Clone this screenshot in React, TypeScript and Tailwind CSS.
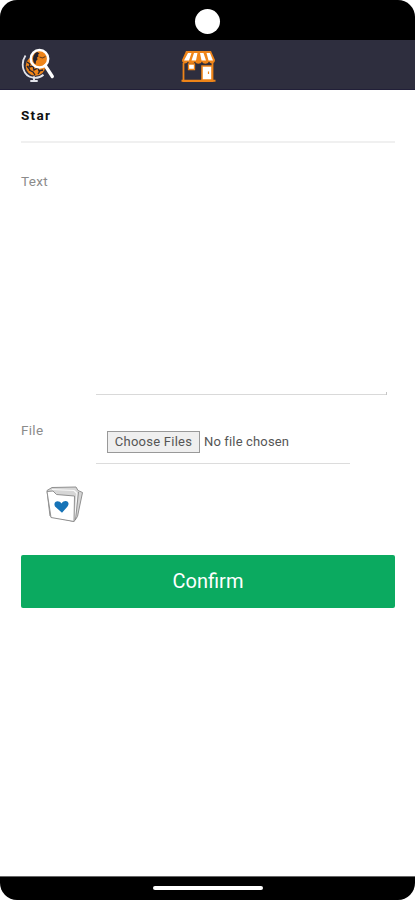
function SearchGlobeIcon() {
  return (
    <svg width="36" height="36" viewBox="0 0 36 36" fill="none" aria-hidden="true">
      <circle cx="14.500" cy="18" r="9.800" fill="#ee8419" />
      <path
        d="M6 14l3 2-1 3 4-1 1 4 4-2 1 3 4-1M8 22l4 2 2 3M17 26l2-3M6 18l3 4"
        stroke="#25222d"
        strokeWidth="1.300"
      />
      <path d="M4.500 7.500C-1 16 2 28 12 29.700c4 .5 8-.8 10.500-3" stroke="#e3e4ea" strokeWidth="1.800" />
      <path d="M13 29v4M10 33h6" stroke="#e3e4ea" strokeWidth="1.900" strokeLinecap="round" />
      <circle cx="18.500" cy="10.800" r="8.700" fill="#ee8419" stroke="#fff" strokeWidth="2.500" />
      <path
        d="M16.500 4c-4 1-6 7-3 11.500l1.200.5.300-3 1.500-1.500-.5-2 1.500-1-.5-2 1.500-.8z"
        fill="#25222d"
      />
      <path d="M18.500 9l3 1 3-1.500" stroke="#68401f" strokeWidth="1.100" />
      <path d="M24.500 18l6.800 10.500" stroke="#fff" strokeWidth="3.300" strokeLinecap="round" />
    </svg>
  );
}

function StoreIcon() {
  return (
    <svg width="36" height="32" viewBox="0 0 36 32" fill="none" aria-hidden="true">
      <path d="M2.500 12v18h29V12" stroke="#ee8419" strokeWidth="1.800" />
      <path d="M.5 29.800h34" stroke="#ee8419" strokeWidth="2" />
      <path d="M5 0h25l4 9c0 4-4.500 4.500-6 1.500-1.500 3-6 3-7 0-1.500 3-6 3-7 0-1.500 3-6 3-7 0C5.500 13.500 1 13 1 9z" fill="#ee8419" />
      <path
        d="M7 2h3.500L8 9.500H3zM13 2h3.500L15 9.500h-4.500zM19 2h3.500l2.500 7.500h-4.500zM25.500 2H29l3 7.500h-4.500z"
        fill="#fff"
      />
      <path d="M7.500 13h6v5.500h-6z" fill="#fff" stroke="#ee8419" strokeWidth="1.300" />
      <path d="M21 15h10v14H21z" fill="#fff" stroke="#ee8419" strokeWidth="1.600" />
      <path d="M27.500 20.500v2.500" stroke="#ee8419" strokeWidth="1.200" />
    </svg>
  );
}

function FolderIcon() {
  return (
    <svg width="38" height="38" viewBox="0 0 38 38" fill="none" strokeLinejoin="round" aria-hidden="true">
      <path d="M1 4.500L6 1.500l24-.5 2 3.500 4.500 2-5 24-3.500 5L4 30z" fill="#d6d6d6" stroke="#909090" />
      <path d="M6 3.500l22 1 3 3-2 24" stroke="#f8f8f8" strokeWidth="1.200" />
      <path d="M32.500 6l-3 28" stroke="#888" strokeWidth=".9" />
      <path
        d="M1 5.500l6-.5 3.500 3.500 18 1.500-.5 25.500L5 31.500z"
        fill="#fff"
        stroke="#909090"
      />
      <path d="M16 26.800L9 20.500c-2.500-5.500 4-7 6.500-3 3.500-5 9.500-1.500 6 3z" fill="#1673b7" />
    </svg>
  );
}

export default function App() {
  return (
    <div className="h-[900px] w-[415px] overflow-hidden bg-white font-['Roboto',sans-serif]">
      <div className="flex h-full flex-col overflow-hidden rounded-[17px] bg-white">
        <div className="flex h-10 shrink-0 justify-center bg-black pt-[9px]">
          <div className="size-[25px] rounded-full bg-white" />
        </div>

        <header className="grid h-[50px] shrink-0 grid-cols-3 items-center border-b border-[#211f38] bg-[#2e2e3e] px-5">
          <a href="#" aria-label="Search" className="justify-self-start pt-0.5 pl-px">
            <SearchGlobeIcon />
          </a>
          <a href="#" aria-label="Store" className="mr-[18px] justify-self-center pt-1">
            <StoreIcon />
          </a>
        </header>

        <main className="flex-1 pr-5 pl-[21px]">
          <div className="h-[53px] border-b-2 border-[#f0f0f0] pt-4 text-[13.5px] leading-[18px] font-bold tracking-[1.3px] text-[#111]">
            Star
          </div>

          <form onSubmit={(e) => e.preventDefault()}>
            <div className="flex h-[252px]">
              <label htmlFor="text" className="w-[75px] shrink-0 pt-[29px] text-[13.5px] leading-[18px] tracking-[0.3px] text-[#8b8b8b]">
                Text
              </label>
              <div className="relative mt-[30px] mr-2 flex flex-1">
                <textarea id="text" className="flex-1 resize-none border-b border-[#d9d9d9] outline-none" />
                <span className="absolute right-0 bottom-0 h-[3px] w-px bg-[#c5c5c5]" />
              </div>
            </div>

            <div className="flex h-[69px]">
              <div className="w-[75px] shrink-0 pt-[26px] text-[13.5px] leading-[18px] tracking-[0.3px] text-[#8b8b8b]">
                File
              </div>
              <div className="flex w-[254px] items-start border-b border-[#dcdcdc] pt-9 pl-[11px] text-[13px] leading-[20px] text-[#555]">
                <button type="button" className="h-[22px] w-[93px] shrink-0 border border-[#999] bg-[#efefef] tracking-[0.25px]">
                  Choose Files
                </button>
                <span className="pt-px pl-1 whitespace-nowrap tracking-[0.15px]">No file chosen</span>
              </div>
            </div>

            <div className="flex h-[91px] pt-[22px] pl-[25px]">
              <FolderIcon />
            </div>

            <button type="submit" className="h-[53px] w-full rounded-[2px] bg-[#0baa60] pb-0.5 text-xl text-white">
              Confirm
            </button>
          </form>
        </main>

        <div className="flex h-6 shrink-0 justify-center border-t border-[#666] bg-black pt-[9px]">
          <div className="h-1 w-[110px] rounded-full bg-white" />
        </div>
      </div>
    </div>
  );
}
